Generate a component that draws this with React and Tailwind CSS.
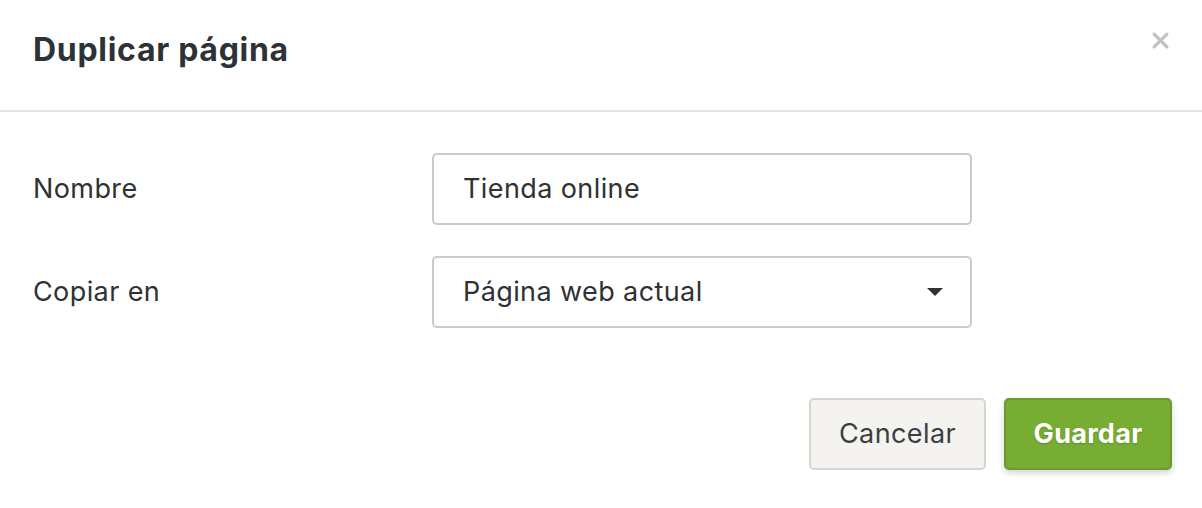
import React from 'react';

const DuplicatePage = () => {
  return (
    <div className="w-[1202px] h-[508px] bg-white font-['Inter','Noto_Sans',sans-serif] text-[#2d3236]">
      <div className="h-[112px] flex items-start justify-between pl-[33px] pr-[32px] border-b-2 border-[#e6e6e6]">
        <h1 className="mt-[30px] text-[32px] leading-[40px] font-bold tracking-[0.7px]">Duplicar página</h1>
        <button className="mt-[31px] text-[#c2c2c2]">
          <svg width="19" height="19" viewBox="0 0 18 18">
            <path d="M3 3 L15 15 M15 3 L3 15" stroke="currentColor" strokeWidth="3.2" strokeLinecap="round" />
          </svg>
        </button>
      </div>

      <div className="pt-[41px] pl-[33px] pr-[30px]">
        <div className="flex items-center">
          <label className="w-[399px] text-[27px] tracking-[0.4px]">Nombre</label>
          <div className="w-[540px] h-[72px] border-2 border-[#c8cbce] rounded-[5px] flex items-center px-[29px] text-[27px] tracking-[0.4px]">
            Tienda online
          </div>
        </div>

        <div className="flex items-center mt-[31px]">
          <label className="w-[399px] text-[27px] tracking-[0.4px]">Copiar en</label>
          <div className="w-[540px] h-[72px] border-2 border-[#c8cbce] rounded-[5px] flex items-center justify-between pl-[29px] pr-[27px] text-[27px] tracking-[0.4px]">
            <span>Página web actual</span>
            <svg width="16" height="9" viewBox="0 0 16 9">
              <path d="M0 0 H16 L8 8 Z" fill="#2d3236" />
            </svg>
          </div>
        </div>

        <div className="flex justify-end gap-[18px] mt-[70px]">
          <button className="w-[177px] h-[72px] bg-[#f4f3ef] border-2 border-[#d6d5d0] rounded-[5px] text-[27px] tracking-[0.4px] text-[#3a3f43]">
            Cancelar
          </button>
          <button className="w-[168px] h-[72px] bg-[#78ad34] border-2 border-[#6b9b2d] rounded-[5px] text-[27px] tracking-[0.3px] font-bold text-white shadow-[0_3px_6px_rgba(0,0,0,0.18)] [text-shadow:0_1px_2px_rgba(0,0,0,0.2)]">
            Guardar
          </button>
        </div>
      </div>
    </div>
  );
};

export default function App() {
  return <DuplicatePage />;
}
